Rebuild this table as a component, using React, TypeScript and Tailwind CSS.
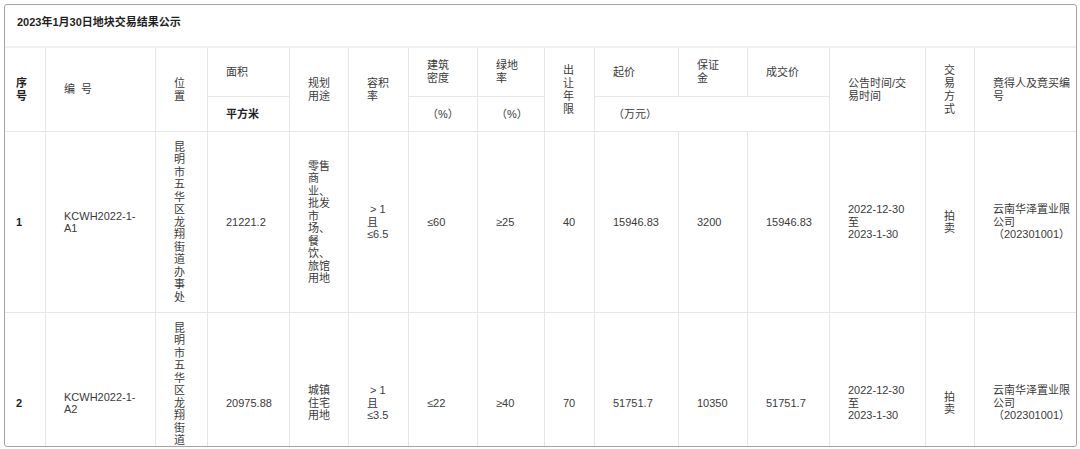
import React from 'react'

const FONT = { fontFamily: '"Liberation Sans", "Noto Sans CJK SC", sans-serif' }

const LOCATION = '昆明市五华区龙翔街道办事处'.split('')

type CellProps = {
  lines: string[]
  className?: string
  bold?: boolean
  first?: boolean
  leading?: string
}

function Cell({ lines, className = '', bold, first, leading = 'leading-[13px]' }: CellProps) {
  return (
    <div
      className={`flex items-center border-b border-r border-[#e6e6e6] ${first ? 'pl-[11px]' : 'pl-[18px]'} ${className}`}
    >
      <div className={`whitespace-nowrap text-[11px] ${leading} ${bold ? 'font-bold text-[#222]' : 'text-[#3a3a3a]'}`}>
        {lines.map((l, i) => (
          <div key={i}>{l}</div>
        ))}
      </div>
    </div>
  )
}

const rows = [
  {
    no: '1',
    code: ['KCWH2022-1-', 'A1'],
    area: '21221.2',
    use: ['零售', '商', '业、', '批发', '市', '场、', '餐', '饮、', '旅馆', '用地'],
    far: ['\u00a0>\u00a01', '且', '≤6.5'],
    density: '≤60',
    green: '≥25',
    years: '40',
    start: '15946.83',
    deposit: '3200',
    deal: '15946.83',
  },
  {
    no: '2',
    code: ['KCWH2022-1-', 'A2'],
    area: '20975.88',
    use: ['城镇', '住宅', '用地'],
    far: ['\u00a0>\u00a01', '且', '≤3.5'],
    density: '≤22',
    green: '≥40',
    years: '70',
    start: '51751.7',
    deposit: '10350',
    deal: '51751.7',
  },
]

export default function App() {
  const D = 'leading-[12.5px]'
  return (
    <div className="w-[1080px] h-[449px] bg-white pt-[4px] pl-[4px]" style={FONT}>
      <div className="w-[1073px] h-[443px] overflow-hidden rounded-[3px] border border-[#a3a3a3] bg-white">
        <div className="h-[43px] border-b-2 border-[#efefef] pl-[12px] pt-[11px] text-[11px] leading-[13px] font-bold text-[#1f1f1f]">
          2023年1月30日地块交易结果公示
        </div>

        <div className="grid grid-cols-[41px_110px_52px_82px_59px_60px_69px_67px_50px_84px_69px_82px_96px_49px_101px] grid-rows-[49px_35px_181px_181px]">
          {/* header */}
          <Cell className="row-span-2" first bold lines={['序', '号']} />
          <Cell className="row-span-2" lines={['编\u00a0\u00a0号']} />
          <Cell className="row-span-2" lines={['位', '置']} />
          <Cell lines={['面积']} />
          <Cell className="row-span-2" lines={['规划', '用途']} />
          <Cell className="row-span-2" lines={['容积', '率']} />
          <Cell lines={['建筑', '密度']} />
          <Cell lines={['绿地', '率']} />
          <Cell className="row-span-2" lines={['出', '让', '年', '限']} />
          <Cell lines={['起价']} />
          <Cell lines={['保证', '金']} />
          <Cell lines={['成交价']} />
          <Cell className="row-span-2" lines={['公告时间/交', '易时间']} />
          <Cell className="row-span-2" lines={['交', '易', '方', '式']} />
          <Cell className="row-span-2 border-r-0" lines={['竟得人及竟买编', '号']} />

          <Cell bold lines={['平方米']} />
          <Cell lines={['（%）']} />
          <Cell lines={['（%）']} />
          <Cell className="col-span-3" lines={['（万元）']} />

          {/* data */}
          {rows.map(r => (
            <React.Fragment key={r.no}>
              <Cell first bold leading={D} lines={[r.no]} />
              <Cell leading={D} lines={r.code} />
              <Cell leading={D} lines={LOCATION} />
              <Cell leading={D} lines={[r.area]} />
              <Cell leading={D} lines={r.use} />
              <Cell leading={D} lines={r.far} />
              <Cell leading={D} lines={[r.density]} />
              <Cell leading={D} lines={[r.green]} />
              <Cell leading={D} lines={[r.years]} />
              <Cell leading={D} lines={[r.start]} />
              <Cell leading={D} lines={[r.deposit]} />
              <Cell leading={D} lines={[r.deal]} />
              <Cell leading={D} lines={['2022-12-30', '至', '2023-1-30']} />
              <Cell leading={D} lines={['拍', '卖']} />
              <Cell className="border-r-0" leading={D} lines={['云南华泽置业限', '公司', '（202301001）']} />
            </React.Fragment>
          ))}
        </div>
      </div>
    </div>
  )
}
